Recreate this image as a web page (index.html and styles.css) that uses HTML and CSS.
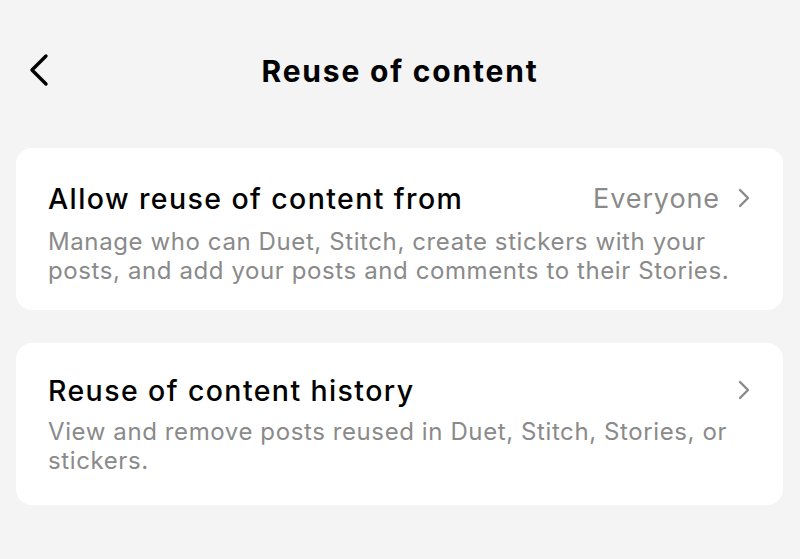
FILE: index.html
```html
<!DOCTYPE html>
<html>
<head>
<meta charset="utf-8">
<link rel="stylesheet" href="styles.css">
</head>
<body>
<div class="page">
  <header class="topbar">
    <span class="back">
      <svg width="22" height="34" viewBox="0 0 22 34"><polyline points="18,3 4,17 18,31" fill="none" stroke="#000" stroke-width="3.4" stroke-linecap="round" stroke-linejoin="round"/></svg>
    </span>
    <h1 class="title">Reuse of content</h1>
  </header>
  <section class="card card-first">
    <div class="row">
      <div class="row-title">Allow reuse of content from</div>
      <div class="row-value">Everyone
        <svg class="chev" width="14" height="22" viewBox="0 0 14 22"><polyline points="3,3 11,11 3,19" fill="none" stroke="#8a8a8a" stroke-width="2.4" stroke-linecap="round" stroke-linejoin="round"/></svg>
      </div>
    </div>
    <p class="desc">Manage who can Duet, Stitch, create stickers with your posts, and add your posts and comments to their Stories.</p>
  </section>
  <section class="card card-second">
    <div class="row">
      <div class="row-title">Reuse of content history</div>
      <div class="row-value">
        <svg class="chev" width="14" height="22" viewBox="0 0 14 22"><polyline points="3,3 11,11 3,19" fill="none" stroke="#8a8a8a" stroke-width="2.4" stroke-linecap="round" stroke-linejoin="round"/></svg>
      </div>
    </div>
    <p class="desc">View and remove posts reused in Duet, Stitch, Stories, or stickers.</p>
  </section>
</div>
</body>
</html>
```
FILE: styles.css
```css
* { box-sizing: border-box; }
html, body { margin: 0; padding: 0; }
body {
  background: #f4f4f4;
  font-family: Inter, "Noto Sans", sans-serif;
  width: 800px;
  height: 559px;
  overflow: hidden;
}
.page {
  padding: 0 16px;
  display: flex;
  flex-direction: column;
  gap: 33px;
}
.topbar {
  position: relative;
  height: 115px;
  display: flex;
  align-items: center;
  justify-content: center;
}
.back {
  position: absolute;
  left: 12px;
  top: 53px;
  display: flex;
}
.title {
  margin: 0;
  font-size: 30px;
  font-weight: 700;
  letter-spacing: 1.8px;
  color: #000;
  padding-top: 27px;
}
.card {
  background: #fff;
  border-radius: 16px;
  width: 767px;
}
.card-first { padding: 33px 32px 25px 32px; }
.card-first .desc { margin-top: 12px; }
.card-second { padding: 30px 32px 30px 32px; }
.row {
  display: flex;
  justify-content: space-between;
  align-items: center;
  height: 34px;
}
.row-title {
  font-size: 28.5px;
  font-weight: 500;
  letter-spacing: 1.4px;
  color: #000;
}
.row-value {
  display: flex;
  align-items: center;
  gap: 17px;
  font-size: 27px;
  letter-spacing: 0.9px;
  color: #8a8a8a;
}
.chev { display: block; }
.desc {
  margin: 10px 0 0 0;
  font-size: 24px;
  letter-spacing: 0.6px;
  line-height: 29px;
  color: #8a8a8a;
}
```
